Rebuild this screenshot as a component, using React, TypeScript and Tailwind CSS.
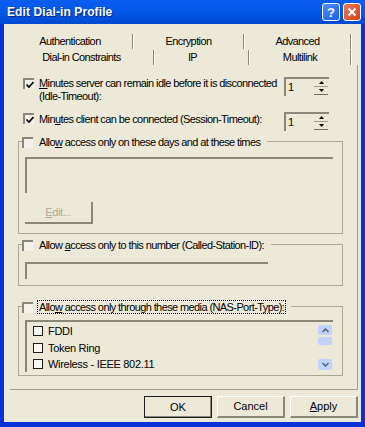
import React from 'react';

const font = "font-['Liberation_Sans',Arial,sans-serif]";

function Check({ checked = false }: { checked?: boolean }) {
  return (
    <span className="flex h-[11px] w-[11px] shrink-0 items-center justify-center border-l-2 border-t-2 border-[#8a8778] bg-[#f3f2ea]">
      {checked && (
        <svg width="8" height="8" viewBox="0 0 8 8">
          <path d="M0.5 3.5 L3 6 L7.5 1" stroke="#000" strokeWidth="1.7" fill="none" />
        </svg>
      )}
    </span>
  );
}

function Spinner() {
  return (
    <div className="flex h-[19px] w-[45px] border-l-2 border-t-2 border-[#8a8778] bg-[#ece9d8]">
      <span className="flex-1 pl-[2px] text-[11px] leading-[16px] text-black">1</span>
      <div className="mr-[1px] flex w-[14px] flex-col">
        <div className="flex h-[8px] items-center justify-center border-b border-[#a09d8e]">
          <svg width="5" height="3" viewBox="0 0 5 3"><path d="M2.5 0 L5 3 L0 3 Z" fill="#000" /></svg>
        </div>
        <div className="flex h-[8px] items-center justify-center border-b border-[#706e62]">
          <svg width="5" height="3" viewBox="0 0 5 3"><path d="M0 0 L5 0 L2.5 3 Z" fill="#000" /></svg>
        </div>
      </div>
    </div>
  );
}

function GroupBox({
  label,
  focused = false,
  className,
  children,
}: {
  label: React.ReactNode;
  focused?: boolean;
  className: string;
  children: React.ReactNode;
}) {
  return (
    <div className={`ml-[8px] w-[325px] border border-[#a9a797] ${className}`}>
      <div className="-mt-[6px] flex">
        <div className="ml-[3px] flex items-center gap-[5px] bg-[#ece9d8] pr-[6px]">
          <Check />
          <span
            className={`whitespace-nowrap px-[1px] text-[11px] leading-[12px] tracking-[-0.6px] text-black ${
              focused ? 'outline outline-1 outline-dotted outline-black' : ''
            }`}
          >
            {label}
          </span>
        </div>
      </div>
      {children}
    </div>
  );
}

function XpButton({ children, isDefault = false }: { children: React.ReactNode; isDefault?: boolean }) {
  return (
    <div
      className={`flex h-[22px] w-[68px] items-center justify-center text-[11px] text-black ${
        isDefault
          ? 'border border-[#1c1c1c] bg-[#ece9d8] shadow-[inset_-1px_-1px_0_#8a8778]'
          : 'border-b-2 border-r-2 border-t border-l border-b-[#8a8778] border-r-[#8a8778] border-t-white border-l-white bg-[#ece9d8]'
      }`}
    >
      {children}
    </div>
  );
}

export default function App() {
  return (
    <div className={`flex h-[427px] w-[365px] flex-col bg-[#0831d9] ${font}`}>
      {/* title bar */}
      <div className="flex h-[24px] shrink-0 items-center bg-gradient-to-b from-[#0a5ef0] via-[#0058e8] to-[#0048d0] pl-[7px] pr-[4px]">
        <span className="flex-1 text-[12px] font-bold tracking-[0.1px] text-white [text-shadow:1px_1px_0_#0a1e7a]">
          Edit Dial-in Profile
        </span>
        <div className="flex gap-[3px]">
          <div className="flex h-[18px] w-[18px] items-center justify-center rounded-[3px] border border-white bg-gradient-to-br from-[#4b8dff] to-[#1c5ee8] text-[13px] font-bold leading-none text-white">
            ?
          </div>
          <div className="flex h-[18px] w-[18px] items-center justify-center rounded-[3px] border border-white bg-gradient-to-br from-[#ec7a5a] to-[#d0401c]">
            <svg width="10" height="10" viewBox="0 0 10 10">
              <path d="M1.5 1.5 L8.5 8.5 M8.5 1.5 L1.5 8.5" stroke="#fff" strokeWidth="2" />
            </svg>
          </div>
        </div>
      </div>

      {/* body */}
      <div className="mx-[4px] mb-[5px] flex flex-1 flex-col bg-[#ece9d8] text-black">
        {/* tabs */}
        <div className="mt-[10px] flex h-[15px] text-[11px] leading-[14px] tracking-[-0.6px]">
          <div className="w-[128px] pl-[4px] text-center">Authentication</div>
          <div className="w-[2px] border-l border-r border-l-[#8a8778] border-r-white" />
          <div className="w-[109px] text-center">Encryption</div>
          <div className="w-[2px] border-l border-r border-l-[#8a8778] border-r-white" />
          <div className="w-[105px] text-center">Advanced</div>
          <div className="w-[2px] border-l border-r border-l-[#8a8778] border-r-white" />
        </div>
        <div className="mt-[1px] flex h-[15px] text-[11px] leading-[15px] tracking-[-0.6px]">
          <div className="w-[149px] pl-[6px] text-center">Dial-in Constraints</div>
          <div className="w-[2px] border-l border-r border-l-[#8a8778] border-r-white" />
          <div className="w-[93px] pr-[18px] text-center">IP</div>
          <div className="w-[2px] border-l border-r border-l-[#8a8778] border-r-white" />
          <div className="w-[100px] text-center">Multilink</div>
          <div className="w-[2px] border-l border-r border-l-[#8a8778] border-r-white" />
        </div>

        {/* panel */}
        <div className="ml-[6px] flex h-[325px] w-[348px] flex-col border-b border-r border-[#a09d8e]">
          <div className="mt-[12px] flex items-start pl-[13px]">
            <div className="mt-[1px]"><Check checked /></div>
            <div className="ml-[5px] w-[245px] text-[11px] leading-[13px] tracking-[-0.6px]">
              <span className="underline">M</span>inutes server can remain idle before it is disconnected
              <br />
              (Idle-Timeout):
            </div>
            <Spinner />
          </div>
          <div className="mt-[9px] flex items-start pl-[13px]">
            <div className="mt-[1px]"><Check checked /></div>
            <div className="ml-[5px] w-[245px] pt-[1px] text-[11px] leading-[13px] tracking-[-0.6px]">
              Min<span className="underline">u</span>tes client can be connected (Session-Timeout):
            </div>
            <Spinner />
          </div>

          <GroupBox
            className="mt-[10px] h-[93px]"
            label={<>Allo<span className="underline">w</span> access only on these days and at these times</>}
          >
            <div className="ml-[6px] mt-[9px] h-[36px] w-[308px] border-l-2 border-t-2 border-[#8a8778]" />
            <div className="ml-[6px] mt-[9px] flex h-[22px] w-[68px] items-center justify-center border-b-2 border-r-2 border-[#8a8778] text-[11px] tracking-[-0.4px] text-[#aca899]">
              <span className="underline">E</span>dit...
            </div>
          </GroupBox>

          <GroupBox
            className="mt-[10px] h-[42px]"
            label={<>Allow <span className="underline">a</span>ccess only to this number (Called-Station-ID):</>}
          >
            <div className="ml-[6px] mt-[11px] h-[17px] w-[243px] border-l-2 border-t-2 border-[#8a8778]" />
          </GroupBox>

          <GroupBox
            focused
            className="mt-[20px] h-[70px]"
            label={<>Allo<span className="underline">w</span> access only through these media (NAS-Port-Type):</>}
          >
            <div className="ml-[6px] mt-[7px] flex h-[52px] w-[308px] border-l-2 border-t-2 border-[#8a8778]">
              <div className="flex flex-1 flex-col pl-[6px] pt-[1px] text-[11px] tracking-[-0.3px]">
                {['FDDI', 'Token Ring', 'Wireless - IEEE 802.11'].map((t) => (
                  <div key={t} className="flex h-[17px] items-center gap-[5px]">
                    <span className="h-[10px] w-[10px] border border-[#1c1c1c] bg-[#f7f6ef]" />
                    <span>{t}</span>
                  </div>
                ))}
              </div>
              <div className="mr-[1px] flex w-[14px] flex-col pt-[3px]">
                <div className="flex h-[10px] items-center justify-center rounded-[2px] bg-[#c2d3fb]">
                  <svg width="7" height="5" viewBox="0 0 7 5"><path d="M0.5 4 L3.5 1 L6.5 4" stroke="#4d6185" strokeWidth="1.5" fill="none" /></svg>
                </div>
                <div className="mt-[2px] h-[8px] rounded-[2px] bg-[#c2d3fb]" />
                <div className="flex-1" />
                <div className="mb-[2px] flex h-[11px] items-center justify-center rounded-[2px] bg-[#c2d3fb]">
                  <svg width="7" height="5" viewBox="0 0 7 5"><path d="M0.5 1 L3.5 4 L6.5 1" stroke="#4d6185" strokeWidth="1.5" fill="none" /></svg>
                </div>
              </div>
            </div>
          </GroupBox>
        </div>

        {/* buttons */}
        <div className="mt-[6px] flex justify-end gap-[5px] pr-[3px]">
          <XpButton isDefault>OK</XpButton>
          <XpButton>Cancel</XpButton>
          <XpButton>
            <span><span className="underline">A</span>pply</span>
          </XpButton>
        </div>
      </div>
    </div>
  );
}
